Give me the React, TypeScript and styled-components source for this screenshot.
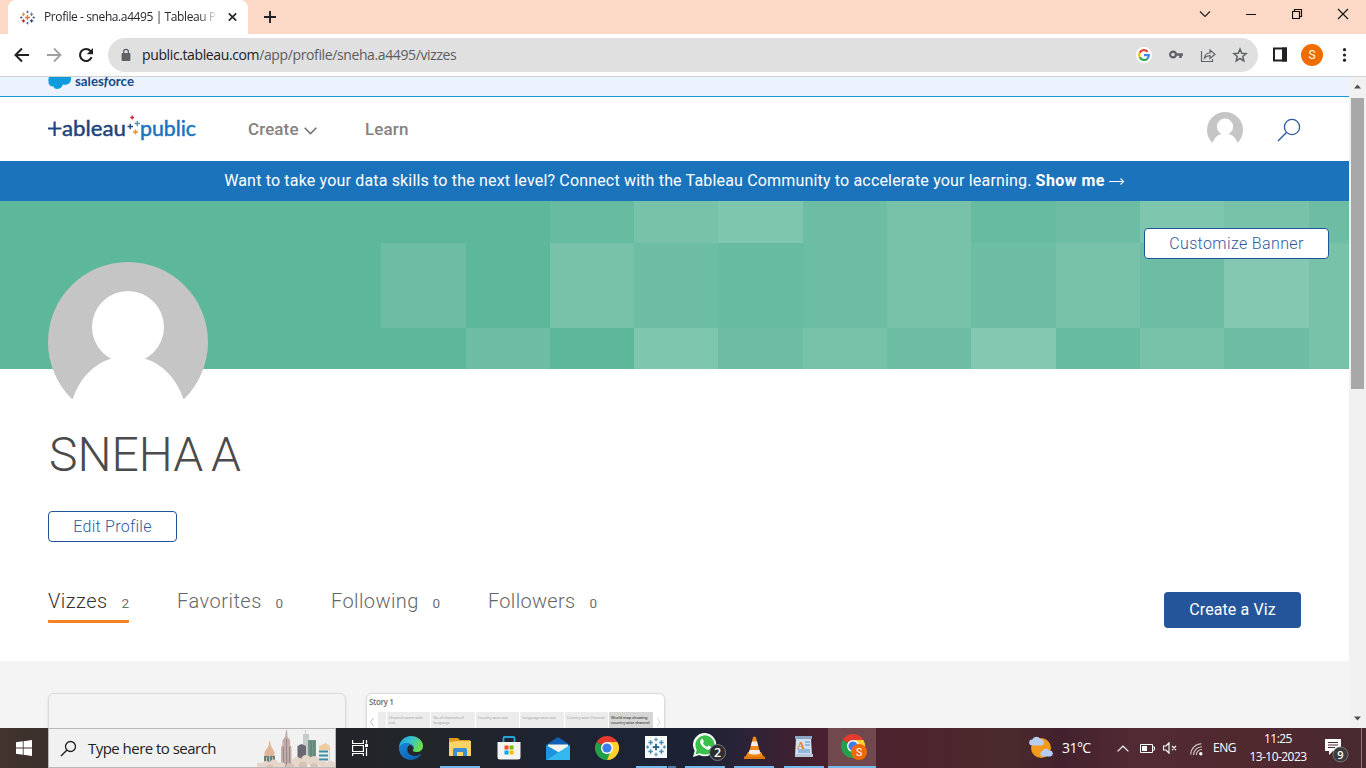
import React from "react";
import styled, { createGlobalStyle } from "styled-components";

const GlobalStyle = createGlobalStyle`
  * { box-sizing: border-box; }
  body { margin: 0; overflow: hidden; font-family: "Open Sans", "Noto Sans", sans-serif; }
  svg { display: block; flex: none; }
  button { font: inherit; padding: 0; border: 0; background: none; }
`;

const Screen = styled.div`
  width: 1366px;
  height: 768px;
  display: flex;
  flex-direction: column;
  overflow: hidden;
  background: #fff;
`;

/* ---------- browser chrome ---------- */

const TabStrip = styled.header`
  height: 34px;
  display: flex;
  background: #fcd9c6;
`;

const Tab = styled.div`
  width: 240px;
  height: 34px;
  margin-left: 8px;
  padding: 0 11px 0 12px;
  display: flex;
  align-items: center;
  background: #fff;
  border-radius: 8px 8px 0 0;
`;

const TabTitle = styled.div`
  width: 172px;
  margin-left: 9px;
  overflow: hidden;
  white-space: nowrap;
  font-size: 12px;
  line-height: 16px;
  letter-spacing: -0.4px;
  color: #27282b;
  mask-image: linear-gradient(to right, #000 154px, transparent 174px);
`;

const TabClose = styled.div`
  margin-left: 11px;
`;

const NewTab = styled.div`
  margin: 11px 0 0 16px;
`;

const WindowControls = styled.div`
  margin-left: auto;
  display: flex;
  align-items: center;
  height: 28px;
  gap: 34px;
  padding-right: 17px;
`;

const Toolbar = styled.div`
  height: 43px;
  display: flex;
  align-items: center;
  padding: 0 0 1px 14px;
  border-bottom: 1px solid #cfd1d2;
`;

const NavIcons = styled.div`
  display: flex;
  gap: 16px;
`;

const AddressBar = styled.div`
  width: 1150px;
  height: 34px;
  margin-left: 14px;
  padding: 0 10px 0 12px;
  display: flex;
  align-items: center;
  border-radius: 17px;
  background: #e0e0e0;
`;

const Url = styled.div`
  margin-left: 10px;
  font-size: 14px;
  line-height: 20px;
  letter-spacing: -0.38px;
  color: #5b5d60;
  b { font-weight: 400; color: #202124; }
`;

const AddressActions = styled.div`
  margin-left: auto;
  display: flex;
  align-items: center;
  gap: 16px;
`;

const ToolbarEnd = styled.div`
  display: flex;
  align-items: center;
  margin-left: 15px;
`;

const Initial = styled.div`
  width: 22px;
  height: 22px;
  margin: 0 12px 0 13px;
  border-radius: 50%;
  background: #ef6c00;
  color: #fff;
  font: 12px/22px Roboto, sans-serif;
  text-align: center;
`;

/* ---------- page ---------- */

const Viewport = styled.div`
  height: 651px;
  display: flex;
`;

const Page = styled.main`
  width: 1349px;
  overflow: hidden;
  font-family: Roboto, sans-serif;
`;

const SalesforceBar = styled.div`
  height: 20px;
  padding-left: 48px;
  background: #ecf3fe;
  border-bottom: 1px solid #1a9bd7;
`;

const SiteHeader = styled.div`
  height: 64px;
  padding: 0 48px;
  display: flex;
  align-items: center;
`;

const NavLink = styled.a<{ $gap: number; $spacing: number }>`
  display: flex;
  align-items: center;
  gap: 5px;
  margin-left: ${(p) => p.$gap}px;
  font-size: 17px;
  font-weight: 500;
  line-height: 24px;
  letter-spacing: ${(p) => p.$spacing}px;
  color: #85827f;
  svg { margin-top: 4px; }
`;

const HeaderEnd = styled.div`
  margin-left: auto;
  padding-top: 2px;
  display: flex;
  align-items: center;
  gap: 34px;
`;

const Promo = styled.div`
  height: 40px;
  padding-bottom: 2px;
  display: flex;
  justify-content: center;
  align-items: center;
  gap: 4px;
  background: #1b74bb;
  color: #fff;
  font-size: 16px;
  letter-spacing: 0.17px;
  white-space: pre;
  b { font-weight: 700; letter-spacing: 0.45px; }
`;

const Banner = styled.section`
  height: 168px;
  position: relative;
  display: grid;
  grid-template-columns: 381.3px repeat(11, 84.31px) 1fr;
  grid-template-rows: 42px 85px 41px;
  background: #5db79b;
`;

const Tile = styled.div<{ $tone: string }>`
  background: ${(p) => p.$tone};
`;

const BannerButton = styled.div`
  position: absolute;
  top: 27px;
  right: 20px;
`;

const OutlineButton = styled.button<{ $width: number; $spacing: number }>`
  display: block;
  width: ${(p) => p.$width}px;
  height: 31px;
  border: 1px solid #1f5498;
  border-radius: 4px;
  background: #fff;
  color: #2e5a9c;
  font-size: 16px;
  font-weight: 300;
  line-height: 29px;
  letter-spacing: ${(p) => p.$spacing}px;
`;

const Profile = styled.section`
  height: 292px;
  padding: 0 48px;
  position: relative;
  display: flex;
  flex-direction: column;
  align-items: flex-start;
`;

const AvatarHolder = styled.div`
  position: absolute;
  top: -107px;
  left: 48px;
`;

const Name = styled.h1`
  margin: 56px 0 0 1px;
  height: 60px;
  font-size: 48px;
  font-weight: 300;
  line-height: 60px;
  letter-spacing: 0;
  word-spacing: -4px;
  color: #4b4b4b;
`;

const EditRow = styled.div`
  margin-top: 26px;
`;

const TabsRow = styled.div`
  width: 100%;
  margin-top: 43px;
  display: flex;
  align-items: flex-start;
`;

const ProfileTab = styled.div<{ $active?: boolean; $width: number; $spacing: number }>`
  width: ${(p) => p.$width}px;
  height: 38px;
  margin-right: 48px;
  padding-top: 1px;
  display: flex;
  justify-content: space-between;
  align-items: baseline;
  white-space: nowrap;
  font-size: 20px;
  font-weight: 300;
  line-height: 30px;
  letter-spacing: ${(p) => p.$spacing}px;
  color: ${(p) => (p.$active ? "#333" : "#666")};
  border-bottom: 3px solid ${(p) => (p.$active ? "#f58220" : "transparent")};
  border-radius: 1px;
  small { font-size: 13.5px; font-weight: 400; letter-spacing: 0; color: #707070; }
`;

const CreateButton = styled.button`
  width: 137px;
  height: 36px;
  margin: 7px 0 0 auto;
  border-radius: 4px;
  background: #24559a;
  color: #fff;
  font-size: 16px;
  line-height: 34px;
  padding-bottom: 1px;
  letter-spacing: 0.1px;
`;

const Gallery = styled.section`
  height: 67px;
  padding: 32px 48px 0;
  display: flex;
  gap: 20px;
  background: #f4f4f4;
`;

const VizCard = styled.article<{ $bg: string; $width: number }>`
  width: ${(p) => p.$width}px;
  height: 200px;
  padding: 3px 0 0 2px;
  border: 1px solid #dadada;
  border-radius: 6px;
  background: ${(p) => p.$bg};
  box-shadow: 0 1px 3px rgba(0, 0, 0, 0.1);
`;

const StoryTitle = styled.div`
  font: 600 8px/10px "Noto Sans", sans-serif;
  letter-spacing: -0.38px;
  color: #757575;
`;

const StoryNav = styled.div`
  height: 26px;
  margin-top: 5px;
  display: flex;
  align-items: flex-start;
`;

const StorySpacer = styled.div`
  width: 8px;
  height: 26px;
  margin-left: 4px;
  background: #ececec;
`;

const StoryPoint = styled.div<{ $active?: boolean }>`
  width: 43.8px;
  height: 26px;
  margin-left: 0.7px;
  padding: 3px 0 0 2px;
  overflow: hidden;
  white-space: pre;
  font: ${(p) => (p.$active ? 600 : 400)} 4px/5px "Noto Sans", sans-serif;
  letter-spacing: -0.15px;
  background: ${(p) => (p.$active ? "#d6d6d6" : "#ececec")};
  color: ${(p) => (p.$active ? "#555" : "#a6a6a6")};
`;

const Scrollbar = styled.div`
  width: 17px;
  background: #f1f1f1;
  display: flex;
  flex-direction: column;
  align-items: center;
  padding: 7px 0;
`;

const Thumb = styled.div`
  width: 13px;
  height: 291px;
  margin-top: 9px;
  background: #a8a8a8;
`;

const ScrollDown = styled.div`
  margin-top: auto;
`;

/* ---------- taskbar ---------- */

const Taskbar = styled.footer`
  height: 40px;
  display: flex;
  font-family: "Open Sans", sans-serif;
  background: linear-gradient(
    to right,
    #43342e 0,
    #3a302d 48px,
    #22242a 340px,
    #222529 420px,
    #1c2334 600px,
    #1c2234 690px,
    #2b2337 745px,
    #45202f 810px,
    #4d232d 900px,
    #4b2a2c 1010px,
    #42212e 1060px,
    #512a33 1130px,
    #50292f 1250px,
    #482a30 1366px
  );
`;

const StartButton = styled.div`
  width: 48px;
  display: grid;
  place-items: center;
`;

const SearchBox = styled.div`
  width: 288px;
  border: 1px solid #b8b8b8;
  background: #f1f1f1;
  display: flex;
  align-items: center;
  padding-left: 11px;
  overflow: hidden;
`;

const SearchText = styled.span`
  margin-left: 11px;
  white-space: nowrap;
  font-size: 15px;
  letter-spacing: -0.53px;
  color: #222;
`;

const Skyline = styled.div`
  margin-left: auto;
  align-self: flex-end;
`;

const TaskButton = styled.div<{ $active?: boolean; $width?: number }>`
  width: ${(p) => p.$width ?? 49}px;
  height: 40px;
  display: flex;
  flex-direction: column;
  align-items: center;
  justify-content: space-between;
  background: ${(p) => (p.$active ? "#70484e" : "transparent")};
`;

const IconSlot = styled.div<{ $shift?: number }>`
  flex: 1;
  display: grid;
  place-items: center;
  padding-left: ${(p) => p.$shift ?? 0}px;
`;

const Underline = styled.div<{ $width: number; $split?: boolean }>`
  width: ${(p) => p.$width}px;
  height: 2px;
  background: ${(p) =>
    p.$split ? "linear-gradient(to right, #76b9ed 31px, #1c2234 31px 32px, #4f7ca6 32px)" : "#76b9ed"};
`;

const TableauTile = styled.div`
  width: 22px;
  height: 22px;
  display: grid;
  place-items: center;
  background: #f7fafc;
`;

const Tray = styled.div`
  margin-left: auto;
  display: flex;
  align-items: center;
  color: #fff;
`;

const TrayItem = styled.div<{ $left: number; $width: number; $top?: number }>`
  width: ${(p) => p.$width}px;
  margin: ${(p) => p.$top ?? 0}px 0 0 ${(p) => p.$left}px;
`;

const TrayText = styled(TrayItem)<{ $size: number; $spacing: number }>`
  font-size: ${(p) => p.$size}px;
  letter-spacing: ${(p) => p.$spacing}px;
  white-space: nowrap;
`;

const Clock = styled.div`
  width: 60px;
  margin-left: 11px;
  font-size: 12px;
  line-height: 18px;
  letter-spacing: -0.55px;
  text-align: center;
  white-space: nowrap;
`;

const DesktopEdge = styled.div`
  width: 1px;
  height: 40px;
  margin: 0 4px 0 12px;
  background: #8f777b;
`;

/* ---------- drawings ---------- */

const Sparks = ({ size, colors }: { size: number; colors: string[] }) => (
  <svg width={size} height={size} viewBox="0 0 24 24" fill="none" strokeWidth="1.8">
    <path d="M12 8v8M8 12h8" stroke={colors[0]} strokeWidth="2.1" />
    <path d="M5.5 4v5.4M2.8 6.7h5.4" stroke={colors[1]} />
    <path d="M18.5 4v5.4M15.8 6.7h5.4" stroke={colors[2]} />
    <path d="M5.5 14.6V20M2.8 17.3h5.4" stroke={colors[3]} />
    <path d="M18.5 14.6V20M15.8 17.3h5.4" stroke={colors[4]} />
    <path d="M12 1v4M10 3h4M12 19v4M10 21h4M2 10v4M0 12h4M22 10v4M20 12h4" stroke={colors[5]} strokeWidth="1.5" />
  </svg>
);

const Person = ({ size }: { size: number }) => (
  <svg width={size} height={size} viewBox="0 0 160 160">
    <defs>
      <clipPath id={`disc${size}`}>
        <circle cx="80" cy="80" r="80" />
      </clipPath>
    </defs>
    <g clipPath={`url(#disc${size})`}>
      <rect width="160" height="137" fill="#c5c5c5" />
      <rect y="137" width="160" height="23" fill="#fff" />
      <circle cx="80" cy="65" r="36" fill="#fff" />
      <path d="M24 139C32 113 52 94 80 94s48 19 56 45z" fill="#fff" />
    </g>
  </svg>
);

const Chrome = ({ badge }: { badge?: boolean }) => (
  <svg width={badge ? 26 : 24} height={badge ? 27 : 24} viewBox={badge ? "0 0 26 27" : "0 0 24 24"}>
    <path d="M12 12L1.6 6A12 12 0 0 1 22.4 6z" fill="#e33b2e" />
    <path d="M12 12L1.6 6A12 12 0 0 0 12 24l5.2-9z" fill="#22a04a" />
    <path d="M12 12H17L12 24A12 12 0 0 0 22.4 6H12z" fill="#fdd130" />
    <circle cx="12" cy="12" r="6" fill="#fff" />
    <circle cx="12" cy="12" r="4.6" fill="#3b7ded" />
    {badge && (
      <>
        <circle cx="18" cy="18" r="8" fill="#f06a0a" />
        <text x="18" y="21.8" textAnchor="middle" fontFamily="Roboto, sans-serif" fontSize="10.5" fill="#fff">S</text>
      </>
    )}
  </svg>
);

const SalesforceLogo = () => (
  <svg width="90" height="16" viewBox="0 0 90 16">
    <path d="M1 0h22c.6 4-1 6.500-4 7.500-1.500.6-3 .3-4 .1-1 2.800-3 4.600-6 4.400-2 0-3-1-3.500-2.500C2.500 9.500.5 8 .5 5 .2 3 .4 1 1 0z" fill="#109cdc" />
    <text x="27" y="8.500" fontFamily="Lato, sans-serif" fontWeight="700" fontSize="12.500" fill="#16498a" textLength="59" lengthAdjust="spacingAndGlyphs">
      sales<tspan fontStyle="italic">f</tspan>orce
    </text>
  </svg>
);

const TableauLogo = () => (
  <svg width="150" height="30" viewBox="0 0 150 30">
    <g fill="none" strokeWidth="2.200">
      <path d="M0 14.500h13.500M6.600 7.500v14.500" stroke="#1f447d" />
      <path d="M79.500 12.500h5.500M82.200 9.800v5.500" stroke="#2a4a85" strokeWidth="1.400" />
      <path d="M82.300 3.500h3.800M84.200 1.600v3.800" stroke="#c72035" strokeWidth="1.300" />
      <path d="M86.600 9.500h5.400M89.300 6.800v5.400" stroke="#5c8fa8" strokeWidth="1.400" />
      <path d="M85 18h5M87.500 15.500v5" stroke="#eb912c" strokeWidth="1.500" />
    </g>
    <g fontFamily="Lato, sans-serif" fontSize="21.500" strokeWidth=".5">
      <text x="14" y="22" fill="#1f447d" stroke="#1f447d" textLength="64" lengthAdjust="spacingAndGlyphs">ableau</text>
      <text x="92" y="22" fill="#1b74bb" stroke="#1b74bb" textLength="56" lengthAdjust="spacingAndGlyphs">public</text>
    </g>
  </svg>
);

const SkylineArt = () => (
  <svg width="78" height="38" viewBox="0 0 78 38">
    <path d="M13 12l1 5 3.500 6v13H7.500V23l4-6 .7-5z" fill="#e0b597" />
    <path d="M7 27h11v10H7z" fill="#5d8482" />
    <path d="M9.500 28v8M12.500 27v9M15.500 28v8" stroke="#e8c7a6" strokeWidth=".8" />
    <path d="M29.200 1h.8l.6 7 2.400 3v5l1.500 2v20H24V18l1.500-2v-5l2.500-3z" fill="#c3aca5" />
    <path d="M26.500 18v20M29.500 10v28M32.500 18v20" stroke="#8d7c86" strokeWidth=".8" />
    <path d="M48 1h1v4h3v25h-6V5h2z" fill="#c4cbca" />
    <path d="M40.500 17l4-2 4.500 2v17h-8.500z" fill="#6b6872" />
    <path d="M51 11h8v22h-8z" fill="#74968a" />
    <path d="M54 12v19M57 12v19" stroke="#567267" strokeWidth=".8" />
    <path d="M62 17l7-3 4 3v20H62z" fill="#f0cb9e" />
    <path d="M62 21h10v15H62z" fill="#e6eeed" />
    <path d="M62 22.500h9M62 26.500h9M62 30.500h9" stroke="#3f8aa2" strokeWidth="1.800" />
    <g fill="#e6d6ca">
      <circle cx="3" cy="37" r="3.500" /><circle cx="9" cy="36" r="4" /><circle cx="17" cy="35" r="4.500" />
      <circle cx="24" cy="37" r="4" /><circle cx="40" cy="33.500" r="5.500" /><circle cx="49" cy="31" r="5" />
      <circle cx="57" cy="32.500" r="5.500" /><circle cx="66" cy="36" r="4.500" /><circle cx="74" cy="36" r="4" />
    </g>
    <g fill="#d6c2b6">
      <circle cx="33" cy="38" r="4" /><circle cx="46" cy="37" r="4.500" /><circle cx="57" cy="38" r="4" /><circle cx="13" cy="39" r="3.500" />
    </g>
  </svg>
);

const EdgeIcon = () => (
  <svg width="24" height="24" viewBox="0 0 24 24">
    <defs>
      <linearGradient id="edgeTop" x1="0" y1="0" x2="1" y2=".4">
        <stop offset="0" stopColor="#1b9de2" /><stop offset=".5" stopColor="#35c1d0" /><stop offset="1" stopColor="#6bdc4e" />
      </linearGradient>
      <linearGradient id="edgeLow" x1="0" y1="0" x2="1" y2="1">
        <stop offset="0" stopColor="#1a86d8" /><stop offset="1" stopColor="#0d5aa8" />
      </linearGradient>
    </defs>
    <path d="M0 12C0 5 5.500 0 12 0s12 4.500 12 10c0 4-3 6-6.500 6-3 0-4-1-3.500-2 1.500-2 .5-5-3-5.500C6 8 1.500 9.500 0 12z" fill="url(#edgeTop)" />
    <path d="M0 12c.5-3 4-5 7.500-5 4.500 0 7 2.500 7 5-.5-1.500-2-3-4-3-3 2-3 7 .5 9.500 3 2 7 2 10.500-.5.500-.3 1 .1.700.6C20 22 16 24 12 24 5 24 0 18.500 0 12z" fill="url(#edgeLow)" />
  </svg>
);

const FolderIcon = () => (
  <svg width="22" height="19" viewBox="0 0 22 19">
    <path d="M0 0h9l2 2h10v3H0z" fill="#dc9b12" />
    <path d="M0 4l9-1h13v15H0z" fill="#fbd366" />
    <path d="M4 18v-6.500a1.500 1.500 0 0 1 1.500-1.500h11a1.500 1.500 0 0 1 1.500 1.500V18h-4v-4H8v4z" fill="#3c8ed2" />
  </svg>
);

const StoreIcon = () => (
  <svg width="24" height="24" viewBox="0 0 24 24">
    <path d="M6.500 6V2a1 1 0 0 1 1-1h9a1 1 0 0 1 1 1v4" fill="none" stroke="#27a4de" strokeWidth="1.800" />
    <path d="M.5 6h23v15a2.500 2.500 0 0 1-2.500 2.500H3A2.500 2.500 0 0 1 .5 21z" fill="#f3f3f3" />
    <path d="M7.500 9.500h4v4h-4z" fill="#f25022" /><path d="M12.500 9.500h4v4h-4z" fill="#7fba00" />
    <path d="M7.500 14.500h4v4h-4z" fill="#00a4ef" /><path d="M12.500 14.500h4v4h-4z" fill="#ffb900" />
  </svg>
);

const MailIcon = () => (
  <svg width="24" height="23" viewBox="0 0 24 23">
    <path d="M0 8l12-8 12 8v3H0z" fill="#0f62b5" />
    <path d="M2 7.500h20V16H2z" fill="#f6f4f1" />
    <path d="M0 8l14 8-14 7z" fill="#1c93dc" />
    <path d="M24 8v15H0z" fill="#34b7ee" />
  </svg>
);

const WhatsAppIcon = () => (
  <svg width="34" height="28" viewBox="0 0 34 28">
    <path d="M1 24l1.700-6.300A11.600 11.600 0 1 1 7.300 22z" fill="#fff" />
    <path d="M3.500 21.500l1.200-4.600A9.600 9.600 0 1 1 8 20.200z" fill="#3cc04c" />
    <path d="M9.300 6.200c.7-.7 1.400-.4 1.700.3l.8 2c.2.500-.8 1.500-.8 1.800.8 1.700 2.300 3 4 3.700.5.100 1.300-1.600 1.800-1.400l2.200 1.100c.6.300.1 2-.9 2.600-3.500 2-10.500-4.300-9.900-8 .1-.9.500-1.600 1.100-2.100z" fill="#fff" />
    <circle cx="25.500" cy="19.500" r="8" fill="#2b2d30" stroke="#7b7c7f" />
    <text x="25.500" y="24" textAnchor="middle" fontFamily="Open Sans, sans-serif" fontWeight="600" fontSize="12.500" fill="#fff">2</text>
  </svg>
);

const VlcIcon = () => (
  <svg width="21" height="23" viewBox="0 0 21 23">
    <path d="M4 16h13l3.500 6.500H.5z" fill="#f28a0e" />
    <path d="M9 1.500q1.500-2 3 0L16.500 18q-6 3-12 0z" fill="#f08a1c" />
    <path d="M8 5.500h5l1.200 4.500H6.800zM5.600 14h9.800l1 3.500q-6 2-11.800 0z" fill="#f1eeea" />
    <path d="M0 20.500h21V23H0z" fill="#df7407" />
  </svg>
);

const WordPadIcon = () => (
  <svg width="20" height="22" viewBox="0 0 20 22">
    <path d="M2 2h15l1 18H1z" fill="#cfe2f4" />
    <path d="M1 0h17v3H1z" fill="#8ba6c3" />
    <path d="M11 6h5M11 9h5M4 14h12M4 16h12" stroke="#5b8ec2" />
    <path d="M1 18h18v3H1z" fill="#b9c8d8" />
    <text x="3" y="13" fontFamily="Liberation Serif, serif" fontWeight="700" fontSize="11" fill="#ec7b23">A</text>
  </svg>
);

const GoogleBadge = () => (
  <svg width="16" height="16" viewBox="0 0 16 16">
    <circle cx="8" cy="8" r="8" fill="#fff" />
    <g fill="none" strokeWidth="2.200">
      <path d="M3.700 5.700A4.900 4.900 0 0 1 11.600 4.700" stroke="#ea4335" />
      <path d="M3.700 10.300a4.900 4.900 0 0 1 0-4.600" stroke="#fbbc05" />
      <path d="M3.700 10.300a4.900 4.900 0 0 0 7.700 1.400" stroke="#34a853" />
      <path d="M11.400 11.700A4.900 4.900 0 0 0 12.900 8.100H8" stroke="#4285f4" />
    </g>
  </svg>
);

const KeyIcon = () => (
  <svg width="16" height="16" viewBox="0 0 16 16">
    <circle cx="5" cy="7.500" r="2.900" fill="none" stroke="#5f6368" strokeWidth="2.200" />
    <path d="M8 6.200h7v2.600h-1.200v2.200h-2.600V8.800H8z" fill="#5f6368" />
  </svg>
);

const tones: Record<string, string> = {
  a: "#5db79b", b: "#67bba1", c: "#6dbda4", d: "#77c2a9", e: "#7fc6ae", f: "#85c8b1",
};
const bannerRows = ["aaabdecdbcedc", "acadcbcdcdcfd", "aacaecdcfbdcd"];

const storyPoints = [
  "Channel name with\nsub",
  "No.of channels of\nlanguage",
  "Country wise sub",
  "Language wise sub",
  "Country wise Channel",
  "World map showing\ncountry wise channel",
];

const blueSparks = ["#235f8c", "#4d8bb0", "#4d8bb0", "#4d8bb0", "#4d8bb0", "#5d97b9"];

export default function App() {
  return (
    <Screen>
      <GlobalStyle />

      <TabStrip>
        <Tab>
          <Sparks size={15} colors={["#e8762c", "#eb912c", "#5b879b", "#c72035", "#1f447d", "#5b6591"]} />
          <TabTitle>Profile - sneha.a4495 | Tableau Public</TabTitle>
          <TabClose>
            <svg width="10" height="10" viewBox="0 0 10 10"><path d="M1.800 1.300l7.400 7.400M9.200 1.300L1.800 8.700" stroke="#27282b" strokeWidth="1.700" /></svg>
          </TabClose>
        </Tab>
        <NewTab>
          <svg width="12" height="12" viewBox="0 0 12 12"><path d="M6 0v12M0 6h12" stroke="#202124" strokeWidth="1.900" /></svg>
        </NewTab>
        <WindowControls>
          <svg width="12" height="12" viewBox="0 0 12 12"><path d="M1 3.500l5 5 5-5" fill="none" stroke="#1b1b1b" strokeWidth="1.100" /></svg>
          <svg width="13" height="12" viewBox="0 0 13 12"><path d="M1 6.500h10" stroke="#111" /></svg>
          <svg width="11" height="12" viewBox="0 0 11 12"><path d="M.5 3.500h7v7h-7zM2.500 3.500v-2h7v7h-2" fill="none" stroke="#111" strokeWidth="1.200" /></svg>
          <svg width="12" height="12" viewBox="0 0 12 12"><path d="M1 1l10 10M11 1L1 11" stroke="#111" strokeWidth="1.100" /></svg>
        </WindowControls>
      </TabStrip>

      <Toolbar>
        <NavIcons>
          <svg width="16" height="16" viewBox="0 0 16 16"><path d="M15 8H2M8 1.500L1.500 8 8 14.500" fill="none" stroke="#202124" strokeWidth="2" /></svg>
          <svg width="16" height="16" viewBox="0 0 16 16"><path d="M1 8h13M8 1.500L14.500 8 8 14.500" fill="none" stroke="#a0a1a3" strokeWidth="1.800" /></svg>
          <svg width="16" height="16" viewBox="0 0 16 16"><path d="M13.600 10.200A6 6 0 1 1 12.500 4L14 5.600" fill="none" stroke="#202124" strokeWidth="2.100" /><path d="M15 1v6.200H8.800z" fill="#202124" /></svg>
        </NavIcons>
        <AddressBar>
          <svg width="12" height="14" viewBox="0 0 12 14"><path d="M2.500 5h7a.9.900 0 0 1 .9.900v6.200a.9.900 0 0 1-.9.900h-7a.9.900 0 0 1-.9-.9V5.900A.9.900 0 0 1 2.500 5z" fill="#5f6368" /><path d="M3.600 6V3.700a2.400 2.400 0 0 1 4.800 0V6" fill="none" stroke="#5f6368" strokeWidth="1.300" /></svg>
          <Url><b>public.tableau.com</b>/app/profile/sneha.a4495/vizzes</Url>
          <AddressActions>
            <GoogleBadge />
            <KeyIcon />
            <svg width="16" height="16" viewBox="0 0 16 16"><path d="M1.500 4v10.500h11V12M4.500 11C5 7.500 7 6 10 6V3l5 4.300-5 4.200V8.600c-2.500 0-4 .8-5.500 2.400z" fill="none" stroke="#5f6368" strokeWidth="1.200" /></svg>
            <svg width="16" height="16" viewBox="0 0 16 16"><path d="M8 2l1.700 4.200 4.400.4-3.300 2.900 1 4.400L8 11.500l-3.800 2.400 1-4.400L1.900 6.600l4.400-.4z" fill="none" stroke="#5f6368" strokeWidth="1.500" /></svg>
          </AddressActions>
        </AddressBar>
        <ToolbarEnd>
          <svg width="15" height="15" viewBox="0 0 15 15"><path d="M1 1.500h12v12H1z" fill="none" stroke="#202124" strokeWidth="2" /><path d="M9 .5h5v14H9z" fill="#202124" /></svg>
          <Initial>S</Initial>
          <svg width="16" height="16" viewBox="0 0 16 16"><g fill="#202124"><circle cx="9.500" cy="2.700" r="1.600" /><circle cx="9.500" cy="8" r="1.600" /><circle cx="9.500" cy="13.200" r="1.600" /></g></svg>
        </ToolbarEnd>
      </Toolbar>

      <Viewport>
        <Page>
          <SalesforceBar><SalesforceLogo /></SalesforceBar>
          <SiteHeader>
            <TableauLogo />
            <NavLink $gap={50} $spacing={0.1}>
              Create
              <svg width="13" height="8" viewBox="0 0 13 8"><path d="M.7.7l5.800 6 5.800-6" fill="none" stroke="#6d6a68" strokeWidth="1.500" /></svg>
            </NavLink>
            <NavLink $gap={48.5} $spacing={0.1}>Learn</NavLink>
            <HeaderEnd>
              <Person size={36} />
              <svg width="24" height="24" viewBox="0 0 24 24"><circle cx="15" cy="9" r="7.600" fill="none" stroke="#2a5a9f" strokeWidth="1.300" /><path d="M9.500 14.500L1 23" stroke="#2a5a9f" strokeWidth="1.500" /></svg>
            </HeaderEnd>
          </SiteHeader>
          <Promo>
            Want to take your data skills to the next level? Connect with the Tableau Community to accelerate your learning.
            <b>Show me</b>
            <svg width="16" height="10" viewBox="0 0 16 10"><path d="M0 6.500h14.500M11.500 3.500l3 3-3 3" fill="none" stroke="#fff" strokeWidth="1.100" /></svg>
          </Promo>
          <Banner>
            {bannerRows.map((row, r) => [...row].map((t, c) => <Tile key={`${r}-${c}`} $tone={tones[t]} />))}
            <BannerButton><OutlineButton $width={185} $spacing={0.38}>Customize Banner</OutlineButton></BannerButton>
          </Banner>
          <Profile>
            <AvatarHolder><Person size={160} /></AvatarHolder>
            <Name>SNEHA A</Name>
            <EditRow><OutlineButton $width={129} $spacing={0.25}>Edit Profile</OutlineButton></EditRow>
            <TabsRow>
              <ProfileTab $active $width={81} $spacing={0.5}>Vizzes <small>2</small></ProfileTab>
              <ProfileTab $width={106} $spacing={0.5}>Favorites <small>0</small></ProfileTab>
              <ProfileTab $width={109} $spacing={0.4}>Following <small>0</small></ProfileTab>
              <ProfileTab $width={109} $spacing={0.3}>Followers <small>0</small></ProfileTab>
              <CreateButton>Create a Viz</CreateButton>
            </TabsRow>
          </Profile>
          <Gallery>
            <VizCard $bg="#f4f4f4" $width={298} />
            <VizCard $bg="#fff" $width={299}>
              <StoryTitle>Story 1</StoryTitle>
              <StoryNav>
                <svg width="5" height="14" viewBox="0 0 5 14"><path d="M4.500 6L1.500 10l3 4" fill="none" stroke="#bbb" /></svg>
                <StorySpacer />
                {storyPoints.map((p, i) => <StoryPoint key={p} $active={i === 5}>{p}</StoryPoint>)}
                <svg width="9" height="14" viewBox="0 0 9 14"><path d="M4 6l3 4-3 4" fill="none" stroke="#d5d5d5" /></svg>
              </StoryNav>
            </VizCard>
          </Gallery>
        </Page>
        <Scrollbar>
          <svg width="7" height="5" viewBox="0 0 7 5"><path d="M3.500.5L7 4.500H0z" fill="#505050" /></svg>
          <Thumb />
          <ScrollDown><svg width="7" height="5" viewBox="0 0 7 5"><path d="M3.500 4.500L0 .5h7z" fill="#505050" /></svg></ScrollDown>
        </Scrollbar>
      </Viewport>

      <Taskbar>
        <StartButton>
          <svg width="16" height="16" viewBox="0 0 16 16"><path d="M0 2.300L6.800 1.300v6.300H0zM7.600 1.200L16 0v7.600H7.600zM0 8.400h6.800v6.300L0 13.700zM7.600 8.400H16V16l-8.400-1.200z" fill="#fff" /></svg>
        </StartButton>
        <SearchBox>
          <svg width="17" height="17" viewBox="0 0 17 17"><circle cx="10.500" cy="6.500" r="5" fill="none" stroke="#222" strokeWidth="1.300" /><path d="M7 10L1 16" stroke="#222" strokeWidth="1.400" /></svg>
          <SearchText>Type here to search</SearchText>
          <Skyline><SkylineArt /></Skyline>
        </SearchBox>
        <TaskButton $width={50}>
          <IconSlot $shift={-1}>
            <svg width="18" height="16" viewBox="0 0 18 16"><path d="M.6 0v3.500h10.800V0M.6 5.500h10.800v6H.6zM.6 16v-2.500h10.800V16M14.500 0v3.500M14.500 8v8" fill="none" stroke="#fff" strokeWidth="1.200" /><path d="M13 4h3v3h-3z" fill="#fff" /></svg>
          </IconSlot>
        </TaskButton>
        <TaskButton><IconSlot><EdgeIcon /></IconSlot></TaskButton>
        <TaskButton><IconSlot><FolderIcon /></IconSlot><Underline $width={40} /></TaskButton>
        <TaskButton><IconSlot><StoreIcon /></IconSlot></TaskButton>
        <TaskButton><IconSlot><MailIcon /></IconSlot></TaskButton>
        <TaskButton><IconSlot><Chrome /></IconSlot></TaskButton>
        <TaskButton>
          <IconSlot>
            <TableauTile><Sparks size={20} colors={blueSparks} /></TableauTile>
          </IconSlot>
          <Underline $width={40} $split />
        </TaskButton>
        <TaskButton><IconSlot $shift={9}><WhatsAppIcon /></IconSlot><Underline $width={40} /></TaskButton>
        <TaskButton $width={50}><IconSlot><VlcIcon /></IconSlot><Underline $width={40} /></TaskButton>
        <TaskButton><IconSlot><WordPadIcon /></IconSlot><Underline $width={40} /></TaskButton>
        <TaskButton $active $width={48}><IconSlot $shift={3}><Chrome badge /></IconSlot><Underline $width={48} /></TaskButton>

        <Tray>
          <TrayItem $left={0} $width={24} $top={-2}>
            <svg width="24" height="23" viewBox="0 0 24 23">
              <circle cx="12" cy="12" r="10" fill="#f59a1d" />
              <path d="M3 9.500a3 3 0 0 1 .3-6 4.500 4.500 0 0 1 8-.5 3.200 3.200 0 0 1 .7 6.500z" fill="#b9cdee" />
              <path d="M13 20.500a3 3 0 0 1 .3-5.500 4 4 0 0 1 7-.5 3 3 0 0 1 1 6z" fill="#b4cdf4" />
            </svg>
          </TrayItem>
          <TrayText $left={9} $width={30} $size={14} $spacing={-0.55} $top={-1}>31°C</TrayText>
          <TrayItem $left={25} $width={12}><svg width="12" height="7" viewBox="0 0 12 7"><path d="M.6 6.400L6 1l5.400 5.400" fill="none" stroke="#fff" strokeWidth="1.200" /></svg></TrayItem>
          <TrayItem $left={11} $width={15}><svg width="15" height="9" viewBox="0 0 15 9"><path d="M.5.5h12v8H.5zM13 3h1.500v3H13" fill="none" stroke="#fff" /><path d="M2 2h5v5H2z" fill="#fff" /></svg></TrayItem>
          <TrayItem $left={8} $width={14}><svg width="14" height="12" viewBox="0 0 14 12"><path d="M.5 4H3l3-3.200v10.400L3 8H.5zM9 4l4 4M13 4L9 8" fill="none" stroke="#fff" strokeWidth="1.100" /></svg></TrayItem>
          <TrayItem $left={13} $width={13} $top={3}>
            <svg width="13" height="13" viewBox="0 0 13 13"><path d="M.8 11.500A10.700 10.700 0 0 1 11.500.8M3.600 12A8.200 8.200 0 0 1 12 3.700M6.300 12A5.500 5.500 0 0 1 12 6.500" fill="none" stroke="#d9cdcf" strokeWidth="1.100" /><circle cx="10.800" cy="10.800" r="1.700" fill="#fff" /></svg>
          </TrayItem>
          <TrayText $left={10} $width={24} $size={12} $spacing={-0.5} $top={-2}>ENG</TrayText>
          <Clock>11:25<br />13-10-2023</Clock>
          <TrayItem $left={17} $width={24} $top={5}>
            <svg width="24" height="24" viewBox="0 0 24 24">
              <path d="M0 0h16v12H8l-4 4v-4H0z" fill="#fff" />
              <path d="M3 3.500h10M3 6h10M3 8.500h7" stroke="#50292f" />
              <circle cx="15.500" cy="15.500" r="7.500" fill="#3c3b3d" stroke="#777" />
              <text x="15.500" y="19.500" textAnchor="middle" fontFamily="Open Sans, sans-serif" fontWeight="600" fontSize="11" fill="#fff">9</text>
            </svg>
          </TrayItem>
          <DesktopEdge />
        </Tray>
      </Taskbar>
    </Screen>
  );
}
